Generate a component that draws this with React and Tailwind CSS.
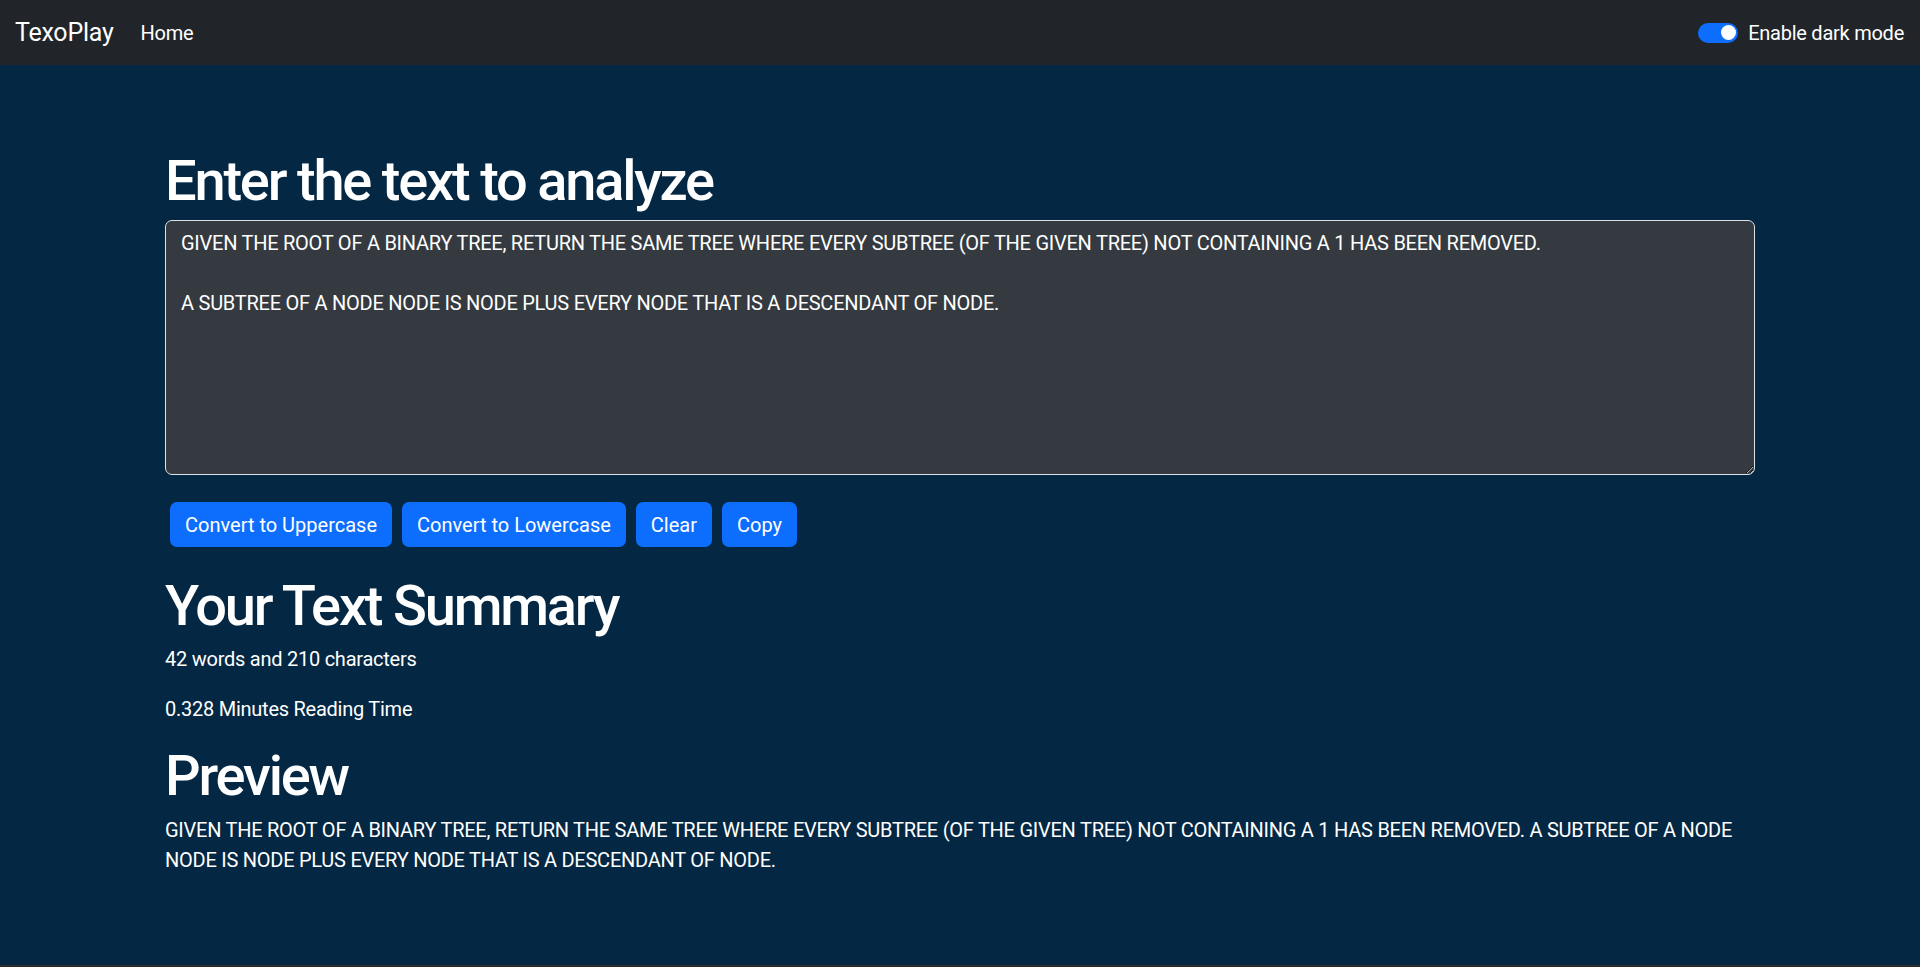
import { useState } from 'react'

const INITIAL_TEXT =
  'GIVEN THE ROOT OF A BINARY TREE, RETURN THE SAME TREE WHERE EVERY SUBTREE (OF THE GIVEN TREE) NOT CONTAINING A 1 HAS BEEN REMOVED.\n\nA SUBTREE OF A NODE NODE IS NODE PLUS EVERY NODE THAT IS A DESCENDANT OF NODE.'

const heading = 'text-[56px] leading-[67px] font-medium tracking-[-2.2px]'
const body = 'text-[20px] leading-[30px]'

function Navbar({ dark, onToggle }) {
  return (
    <nav className="h-[65px] bg-[#212529] flex items-center justify-between pl-[15px] pr-[16px]">
      <div className="flex items-center">
        <a href="#" className="text-[25px] leading-[37px] text-white mr-[27px]">TexoPlay</a>
        <a href="#" className={`${body} text-white`}>Home</a>
      </div>
      <label className="flex items-center cursor-pointer">
        <button
          type="button"
          onClick={onToggle}
          className={`w-[40px] h-[20px] rounded-full flex items-center px-[2.5px] ${
            dark ? 'bg-[#0d6efd] justify-end' : 'bg-[#212529] border border-gray-400 justify-start'
          }`}
        >
          <span className="block w-[15px] h-[15px] rounded-full bg-white" />
        </button>
        <span className={`ml-[10px] ${body} text-white`}>Enable dark mode</span>
      </label>
    </nav>
  )
}

export default function App() {
  const [text, setText] = useState(INITIAL_TEXT)
  const [dark, setDark] = useState(true)

  const words = text.split(/\s+/).filter((w) => w.length !== 0).length
  const readTime = 0.008 * text.split(' ').length

  const btn = `mx-[5px] h-[45px] px-[15px] rounded-[7px] bg-[#0d6efd] text-white tracking-normal ${body}`

  return (
    <div className={`font-['Roboto',sans-serif] tracking-[-0.25px] min-h-screen flex flex-col ${dark ? 'bg-[#042743]' : 'bg-white'}`}>
      <Navbar dark={dark} onToggle={() => setDark((d) => !d)} />
      <main className={`flex-1 ${dark ? 'text-white' : 'text-[#212529]'}`}>
        <div className="w-[1590px] mx-auto pt-[83px]">
          <h1 className={`${heading} mb-[5px]`}>Enter the text to analyze</h1>
          <textarea
            value={text}
            onChange={(e) => setText(e.target.value)}
            className={`block w-full h-[255px] bg-[#343a40] border border-[#dee2e6] rounded-[7px] px-[15px] pt-[7px] pb-[7px] ${body} text-white outline-none`}
          />
          <div className="flex mt-[27px]">
            <button type="button" className={btn} onClick={() => setText(text.toUpperCase())}>Convert to Uppercase</button>
            <button type="button" className={btn} onClick={() => setText(text.toLowerCase())}>Convert to Lowercase</button>
            <button type="button" className={btn} onClick={() => setText('')}>Clear</button>
            <button type="button" className={btn} onClick={() => navigator.clipboard?.writeText(text)}>Copy</button>
          </div>

          <h1 className={`${heading} mt-[26px] mb-[4px]`}>Your Text Summary</h1>
          <p className={`${body} mb-[20px]`}>{words} words and {text.length} characters</p>
          <p className={`${body} mb-[19px]`}>{readTime} Minutes Reading Time</p>

          <h1 className={`${heading} mb-[5px]`}>Preview</h1>
          <p className={body}>{text.length > 0 ? text : 'Nothing to preview!'}</p>
        </div>
      </main>
      <div className="h-[2px] bg-[#2b2b2b]" />
    </div>
  )
}
